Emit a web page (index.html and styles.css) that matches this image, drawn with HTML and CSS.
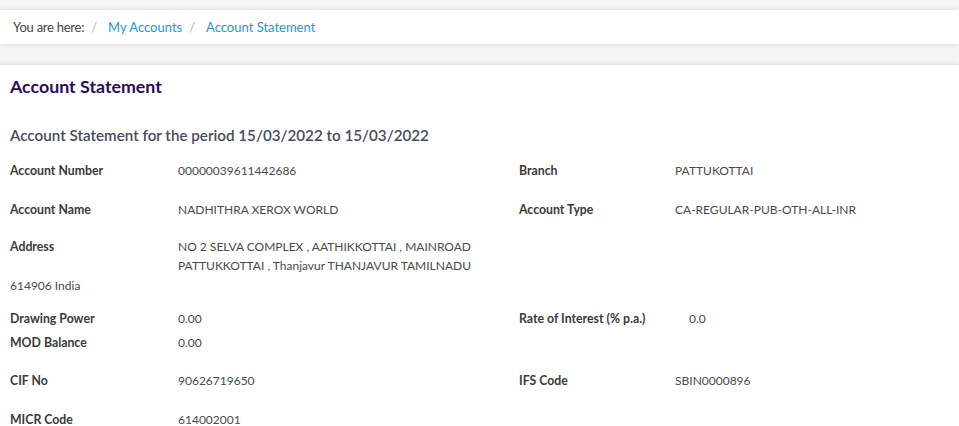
FILE: index.html
```html
<!DOCTYPE html>
<html>
<head>
<meta charset="utf-8">
<link rel="stylesheet" href="styles.css">
</head>
<body>
<div class="page">
  <nav class="crumbs">
    <span class="here">You are here:</span>
    <span class="sep">/</span>
    <a class="link">My Accounts</a>
    <span class="sep">/</span>
    <a class="link">Account Statement</a>
  </nav>
  <main class="card">
    <h1 class="title">Account Statement</h1>
    <h2 class="period">Account Statement for the period 15/03/2022 to 15/03/2022</h2>
    <div class="row">
      <div class="lbl">Account Number</div><div class="val">00000039611442686</div>
      <div class="lbl">Branch</div><div class="val">PATTUKOTTAI</div>
    </div>
    <div class="row r-name">
      <div class="lbl">Account Name</div><div class="val">NADHITHRA XEROX WORLD</div>
      <div class="lbl">Account Type</div><div class="val">CA-REGULAR-PUB-OTH-ALL-INR</div>
    </div>
    <div class="row r-addr">
      <div class="lbl">Address</div><div class="val">NO 2 SELVA COMPLEX , AATHIKKOTTAI , MAINROAD<br>PATTUKKOTTAI , Thanjavur THANJAVUR TAMILNADU</div>
    </div>
    <div class="addr-tail">614906 India</div>
    <div class="row wide r-dp">
      <div class="lbl">Drawing Power</div><div class="val">0.00</div>
      <div class="lbl">Rate of Interest (% p.a.)</div><div class="val">0.0</div>
    </div>
    <div class="row r-mod">
      <div class="lbl">MOD Balance</div><div class="val">0.00</div>
    </div>
    <div class="row">
      <div class="lbl">CIF No</div><div class="val">90626719650</div>
      <div class="lbl">IFS Code</div><div class="val">SBIN0000896</div>
    </div>
    <div class="row last">
      <div class="lbl">MICR Code</div><div class="val">614002001</div>
    </div>
  </main>
</div>
</body>
</html>
```
FILE: styles.css
```css
html, body {
  margin: 0;
  padding: 0;
}
body {
  background: #f6f6f6;
  font-family: Lato, "Open Sans", "Liberation Sans", sans-serif;
  color: #333;
  overflow: hidden;
  height: 426px;
}
.page {
  padding-top: 10px;
}
.crumbs {
  background: #fff;
  height: 34px;
  display: flex;
  align-items: center;
  padding-left: 13px;
  font-size: 13px;
  box-shadow: 0 0 6px rgba(0,0,0,0.14);
  position: relative;
  z-index: 1;
}
.here {
  color: #444;
  letter-spacing: -0.25px;
}
.sep {
  color: #b5b5b5;
  margin: 0 11px 0 7px;
}
.link {
  color: #2c96cb;
}
.card {
  margin-top: 20px;
  background: #fff;
  border-top: 1px solid #e4e4e4;
  box-shadow: 0 -2px 4px rgba(0,0,0,0.05);
  padding: 10px 0 0 10px;
}
.title {
  margin: 0;
  font-size: 17.8px;
  line-height: 22px;
  font-weight: 700;
  color: #2a0b5c;
}
.period {
  margin: 28px 0 16px;
  font-size: 15.2px;
  line-height: 20px;
  font-weight: 600;
  color: #4b4b58;
}
.row {
  display: grid;
  grid-template-columns: 168px 341px 156px 1fr;
  font-size: 12px;
  line-height: 19px;
  margin-bottom: 20px;
}
.row.wide {
  grid-template-columns: 168px 341px 170px 1fr;
}
.lbl {
  font-weight: 700;
  color: #3a3a3a;
  font-size: 12.3px;
}
.val {
  color: #4a4a4a;
}
.r-name { margin-bottom: 18px; }
.r-addr { margin-bottom: 1px; }
.addr-tail {
  font-size: 12px;
  line-height: 19px;
  color: #4a4a4a;
  margin-bottom: 14px;
}
.r-dp { margin-bottom: 5px; }
.r-mod { margin-bottom: 19px; }
.row.last { margin-bottom: 0; }
```
